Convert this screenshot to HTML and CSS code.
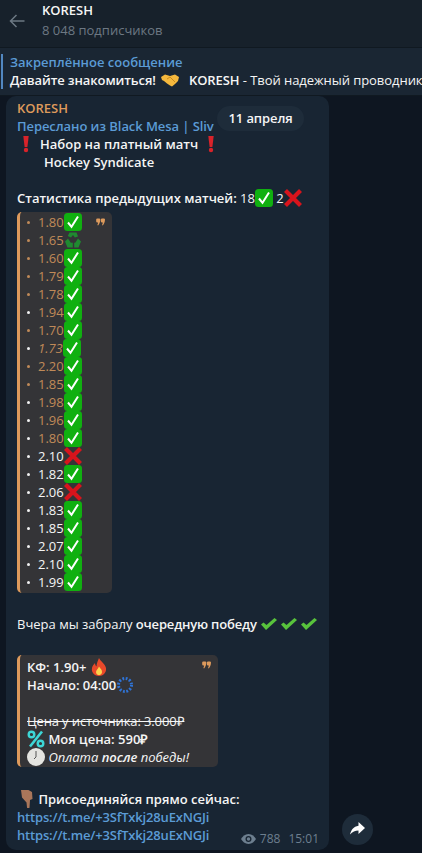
FILE: index.html
```html
<!DOCTYPE html>
<html lang="ru">
<head>
    <meta charset="UTF-8">
    <meta name="viewport" content="width=device-width, initial-scale=1.0">
    <title>KORESH</title>
    <link rel="stylesheet" href="styles.css">
</head>
<body>
    <svg class="sprites" width="0" height="0">
        <symbol id="ok" viewBox="0 0 18 18">
            <rect width="18" height="18" rx="3.500" fill="#10b010"/>
            <path d="M4 9.500l3.500 4.300L14 3.500" fill="none" stroke="#fff" stroke-width="2"/>
        </symbol>
        <symbol id="no" viewBox="0 0 18 18">
            <path d="M1.500 1.500l15 15M16.500 1.500l-15 15" fill="none" stroke="#d8141c" stroke-width="4.200"/>
        </symbol>
        <symbol id="bang" viewBox="0 0 18 18">
            <path d="M6.300 1h5.400l-1.300 11H7.600z" fill="#d8232a"/>
            <circle cx="9" cy="15" r="2.200" fill="#d8232a"/>
        </symbol>
        <symbol id="recycle" viewBox="0 0 18 18">
            <path d="M5.500 1.500h7l1.500 4-3.200 1-1.800-2.500-2 2.500-3.200-1.500zM1 10.500l3-3 2.800 4.300h2v4.700H3.500zM17 10.500l-3-3-2.800 4.300h-1v4.700h4.300z" fill="#1f8a30"/>
        </symbol>
        <symbol id="tick" viewBox="0 0 18 18">
            <path d="M1 9.500l5 5.500L17 5l-2.500-2-8 7-3-2.500z" fill="#58c23c"/>
        </symbol>
        <symbol id="qmark" viewBox="0 0 10 8">
            <path d="M1.500 0h2a1.300 1.300 0 0 1 1.300 1.300c0 2.700-1 5-2.500 6.500L1.500 7.300c.5-1 .8-2 .8-2.800h-.8A1.300 1.300 0 0 1 .2 3.200V1.300A1.300 1.300 0 0 1 1.500 0zM6.700 0h2A1.300 1.300 0 0 1 10 1.300c0 2.700-1 5-2.500 6.500l-.8-.5c.5-1 .8-2 .8-2.800h-.8a1.300 1.300 0 0 1-1.300-1.300V1.300A1.300 1.300 0 0 1 6.700 0z" fill="#dd9a5c"/>
        </symbol>
    </svg>

    <header class="topbar">
        <svg class="back" width="16" height="14" viewBox="0 0 16 14">
            <path d="M15.500 7H1.500M7.500 1L1.500 7l6 6" fill="none" stroke="#6c7883" stroke-width="1.500"/>
        </svg>
        <div class="title">
            <div class="name">KORESH</div>
            <div class="subs">8 048 подписчиков</div>
        </div>
    </header>

    <div class="pinned">
        <div class="pin-text">
            <div class="pin-title">Закреплённое сообщение</div>
            <div class="pin-body">Давайте знакомиться! <svg class="emoji shake" viewBox="0 0 18 18"><path d="M0 6l4-2.500 5 1.500 5-1.500 4 2.500-1 4-3 3-3 2.500-2-1-3-2-3-2.500-2-1z" fill="#f5b83d"/><path d="M6 8l3-2 5 5" fill="none" stroke="#c98a1e" stroke-width="1"/></svg><span class="pin-name">KORESH</span> <span class="thin">- Твой надежный проводник</span></div>
        </div>
    </div>

    <main class="chat">
        <article class="bubble">
            <div class="author">KORESH</div>
            <div class="forward">Переслано из Black Mesa | Sliv</div>
            <p class="line ind-a"><svg class="emoji"><use href="#bang"/></svg><span class="set-title">Набор на платный матч</span> <svg class="emoji"><use href="#bang"/></svg></p>
            <p class="line ind-b">Hockey Syndicate</p>
            <p class="line blank"></p>
            <p class="line">Статистика предыдущих матчей: <span class="thin">18</span><svg class="emoji"><use href="#ok"/></svg> <span class="thin">2</span><svg class="emoji"><use href="#no"/></svg></p>

            <blockquote class="quote stats">
                <svg class="quote-mark"><use href="#qmark"/></svg>
                <div class="stat orange"><i class="dot"></i>1.80<svg class="emoji"><use href="#ok"/></svg></div>
                <div class="stat orange"><i class="dot"></i>1.65<svg class="emoji"><use href="#recycle"/></svg></div>
                <div class="stat orange"><i class="dot"></i>1.60<svg class="emoji"><use href="#ok"/></svg></div>
                <div class="stat orange"><i class="dot"></i>1.79<svg class="emoji"><use href="#ok"/></svg></div>
                <div class="stat orange"><i class="dot"></i>1.78<svg class="emoji"><use href="#ok"/></svg></div>
                <div class="stat orange"><i class="dot white"></i>1.94<svg class="emoji"><use href="#ok"/></svg></div>
                <div class="stat orange"><i class="dot"></i>1.70<svg class="emoji"><use href="#ok"/></svg></div>
                <div class="stat orange"><i class="dot white"></i><em>1.73</em><svg class="emoji"><use href="#ok"/></svg></div>
                <div class="stat orange"><i class="dot"></i>2.20<svg class="emoji"><use href="#ok"/></svg></div>
                <div class="stat orange"><i class="dot"></i>1.85<svg class="emoji"><use href="#ok"/></svg></div>
                <div class="stat orange"><i class="dot white"></i>1.98<svg class="emoji"><use href="#ok"/></svg></div>
                <div class="stat orange"><i class="dot white"></i>1.96<svg class="emoji"><use href="#ok"/></svg></div>
                <div class="stat orange"><i class="dot white"></i>1.80<svg class="emoji"><use href="#ok"/></svg></div>
                <div class="stat"><i class="dot white"></i>2.10<svg class="emoji"><use href="#no"/></svg></div>
                <div class="stat"><i class="dot white"></i>1.82<svg class="emoji"><use href="#ok"/></svg></div>
                <div class="stat"><i class="dot white"></i>2.06<svg class="emoji"><use href="#no"/></svg></div>
                <div class="stat"><i class="dot white"></i>1.83<svg class="emoji"><use href="#ok"/></svg></div>
                <div class="stat"><i class="dot white"></i>1.85<svg class="emoji"><use href="#ok"/></svg></div>
                <div class="stat"><i class="dot white"></i>2.07<svg class="emoji"><use href="#ok"/></svg></div>
                <div class="stat"><i class="dot white"></i>2.10<svg class="emoji"><use href="#ok"/></svg></div>
                <div class="stat"><i class="dot white"></i>1.99<svg class="emoji"><use href="#ok"/></svg></div>
            </blockquote>

            <p class="line blank"></p>
            <p class="line victory"><span class="thin">Вчера мы забралу</span> <span class="tight">очередную победу</span> <svg class="emoji"><use href="#tick"/></svg><svg class="emoji tick-next"><use href="#tick"/></svg><svg class="emoji tick-next"><use href="#tick"/></svg></p>
            <p class="line blank"></p>

            <blockquote class="quote offer">
                <svg class="quote-mark"><use href="#qmark"/></svg>
                <p class="line">КФ: 1.90+ <svg class="emoji" viewBox="0 0 18 18"><path d="M9 0c1 3 6 5.500 7 10 .7 4.500-3 8-7 8s-8-3.500-7-8c.5-2 1.500-3.500 3-5 0 1.500.5 2.500 1.500 3.500C6.500 5.500 8 2.500 9 0z" fill="#e8492a"/><path d="M9 8.500c1.200 2 3.500 3.500 3 6-.5 2-2 2.500-3 2.500s-3-.5-3-3c0-2 2-3 3-5.500z" fill="#fbd34c"/></svg></p>
                <p class="line">Начало: 04:00<svg class="emoji" viewBox="0 0 18 18"><circle cx="9" cy="9" r="6.500" fill="none" stroke="#2f74d8" stroke-width="3" stroke-dasharray="1.800 1.600"/></svg></p>
                <p class="line blank"></p>
                <p class="line thin source-price"><s>Цена у источника: 3.000₽</s></p>
                <p class="line"><svg class="emoji" viewBox="0 0 18 18"><path d="M15 1.500L3 16.500" stroke="#3dd6d6" stroke-width="2.600"/><circle cx="4.500" cy="4.500" r="2.800" fill="none" stroke="#3dd6d6" stroke-width="2.400"/><circle cx="13.500" cy="13.500" r="2.800" fill="none" stroke="#3dd6d6" stroke-width="2.400"/></svg> Моя цена: 590₽</p>
                <p class="line"><svg class="emoji" viewBox="0 0 18 18"><circle cx="9" cy="9" r="9" fill="#e4e4e0"/><path d="M9 3V9l-2 2" fill="none" stroke="#555" stroke-width="1"/></svg> <em class="thin">Оплата</em> <em>после</em> <em class="thin">победы!</em></p>
            </blockquote>

            <p class="line blank"></p>
            <p class="line join"><svg class="emoji" viewBox="0 0 18 18"><path d="M4 0l6.500-.5 4.500 2.500.5 7-2.500 1-.5 7.500c-.2 1.300-2.300 1.300-2.500 0l-.5-5L5 7.500z" fill="#a9765a"/></svg> Присоединяйся прямо сейчас:</p>
            <a class="link">https://t.me/+3SfTxkj28uExNGJi</a>
            <a class="link">https://t.me/+3SfTxkj28uExNGJi</a>
            <div class="meta">
                <svg width="15" height="10" viewBox="0 0 15 10"><path d="M7.500 0C4 0 1.500 2.500 0 5c1.500 2.500 4 5 7.500 5S13.500 7.500 15 5C13.500 2.500 11 0 7.500 0z" fill="#6d7f8f"/><circle cx="7.500" cy="5" r="3" fill="#182533"/><circle cx="7.500" cy="5" r="1.700" fill="#6d7f8f"/></svg>
                <span>788</span>
                <span class="time">15:01</span>
            </div>
            <div class="date-pill">11 апреля</div>
        </article>
        <button class="share">
            <svg width="15" height="13" viewBox="0 0 15 13"><path d="M8.500 0L15 6l-6.500 6V8.500C5 8.500 2.500 9.700 0 12.500 1 8 3.500 4.500 8.500 3.700z" fill="#fff"/></svg>
        </button>
    </main>
</body>
</html>
```

FILE: styles.css
```css
* {
    box-sizing: border-box;
}
html, body {
    margin: 0;
    height: 853px;
    overflow: hidden;
}
body {
    background: #0e1621;
    color: #f5f5f5;
    font-family: "Open Sans", Arial, sans-serif;
    font-size: 13px;
    font-weight: 600;
    line-height: 18px;
}
.sprites {
    position: absolute;
}
.topbar {
    display: flex;
    height: 47px;
    background: #17212b;
}
.back {
    margin: 14px 0 0 9px;
}
.title {
    margin: 0 0 0 17px;
}
.name {
    height: 20px;
    line-height: 20px;
}
.subs {
    line-height: 20px;
    color: #6d7883;
    font-weight: 400;
}
.pinned {
    height: 49px;
    padding: 6px 0 0 1px;
    background: #1a2633;
    border-top: 1px solid #101921;
    border-bottom: 1px solid #101921;
    white-space: nowrap;
    overflow: hidden;
}
.pin-text {
    height: 35px;
    padding-left: 7px;
    border-left: 2px solid #5288c1;
}
.pin-title {
    color: #5b9bd5;
    line-height: 17px;
}
.pin-body {
    line-height: 18px;
    letter-spacing: -0.1px;
}
.pin-body .thin {
    letter-spacing: -0.05px;
}
.shake {
    margin-left: 2px;
}
.pin-name {
    margin-left: 10px;
}
.thin {
    font-weight: 400;
}
.emoji {
    width: 18px;
    height: 18px;
    vertical-align: -4px;
}
.chat {
    display: flex;
    align-items: flex-start;
    height: 757px;
}
.bubble {
    position: relative;
    width: 323px;
    height: 754px;
    margin-left: 6px;
    padding: 3px 11px 0;
    background: #182533;
    border-radius: 10px;
}
.author {
    color: #dd9a5c;
}
.forward {
    color: #5b9bd5;
    letter-spacing: -0.07px;
}
.line {
    margin: 0;
    min-height: 18px;
}
.ind-b {
    padding-left: 27px;
}
.set-title {
    margin-left: 5px;
}
.quote {
    position: relative;
    margin: 5px 0 4px;
    border-left: 3px solid #dd9a5c;
    border-radius: 5px;
    background: #343437;
}
.stats {
    width: 95px;
    height: 381px;
    padding: 1px 0 0 7px;
}
.offer {
    width: 201px;
    height: 112px;
    margin-top: 4px;
    padding: 3px 0 0 7px;
}
.quote-mark {
    position: absolute;
    top: 6px;
    right: 7px;
    width: 9px;
    height: 8px;
}
.stat {
    display: flex;
    align-items: center;
    height: 18px;
    font-weight: 400;
}
.stat.orange {
    color: #c08a58;
}
.dot {
    width: 3px;
    height: 3px;
    margin-right: 8px;
    border-radius: 50%;
    background: #c08a58;
}
.dot.white {
    background: #f0f0f0;
}
.victory {
    white-space: nowrap;
}
.tight {
    letter-spacing: -0.18px;
}
.tick-next {
    margin-left: 2px;
}
.source-price {
    letter-spacing: -0.12px;
}
.join {
    margin-top: 1px;
}
.link {
    display: block;
    color: #5b9bd5;
    letter-spacing: -0.17px;
}
.meta {
    position: absolute;
    right: 10px;
    bottom: 2px;
    display: flex;
    align-items: center;
    gap: 4px;
    color: #6d7f8f;
    font-weight: 400;
    font-size: 12px;
}
.time {
    margin-left: 4px;
}
.date-pill {
    position: absolute;
    top: 10px;
    left: 211px;
    width: 87px;
    height: 25px;
    border-radius: 13px;
    background: #1e2c3a;
    text-align: center;
    line-height: 25px;
    letter-spacing: -0.1px;
}
.share {
    width: 31px;
    height: 31px;
    margin: 718px 0 0 13px;
    padding: 0;
    border: 0;
    border-radius: 50%;
    background: #1e2c3a;
}
```
